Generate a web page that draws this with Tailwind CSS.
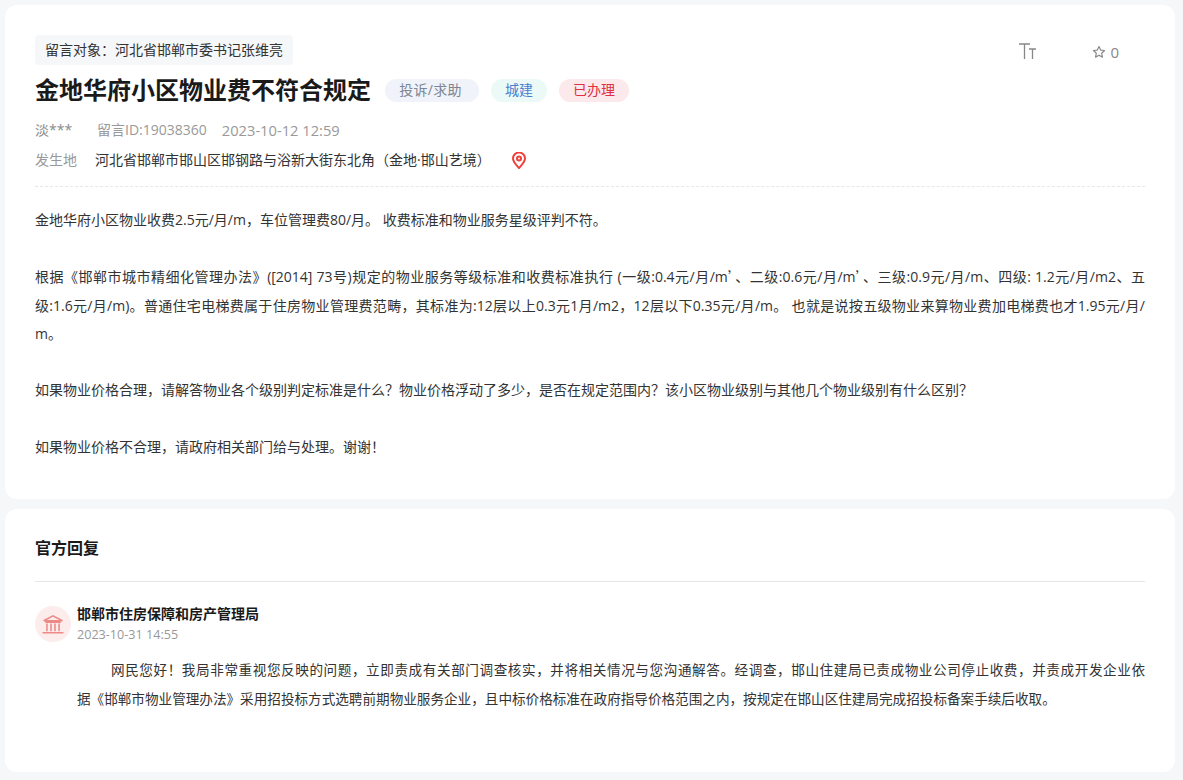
<!DOCTYPE html>
<html lang="zh">
<head>
    <meta charset="UTF-8">
    <meta name="viewport" content="width=device-width, initial-scale=1.0">
    <title>留言详情</title>
    <script src="https://cdn.jsdelivr.net/npm/@tailwindcss/browser@4"></script>
</head>
<body class="bg-[#f6f7f9] font-['Open_Sans','Noto_Sans_CJK_SC',sans-serif] text-[#333] overflow-hidden">
    <div class="w-[1180px] h-[780px] px-[5px] pt-[5px] flex flex-col gap-[10px]">

        <!-- message -->
        <div class="h-[494px] bg-white rounded-xl px-[30px] pt-[30px]">
            <div class="flex justify-between">
                <div class="h-[30px] px-[10px] flex items-center bg-[#f6f7f9] rounded-sm text-sm text-[#333]">留言对象：河北省邯郸市委书记张维亮</div>
                <div class="flex items-start text-[#888] pr-[26px] pt-[8px]">
                    <svg class="w-[18px] h-[16px] mr-[56px]" viewBox="0 0 18 16" fill="none" stroke="#888" stroke-width="1.300"><path d="M1 1h11M6.500 1v15M11 6h7M14.500 6v10"/></svg>
                    <svg class="w-[14px] h-[14px] mr-[4px] mt-[2px]" viewBox="0 0 24 24" fill="none" stroke="#888" stroke-width="2" stroke-linejoin="round"><path d="M12 2.500l2.900 6.200 6.700.8-5 4.600 1.300 6.700-5.900-3.300-5.900 3.300 1.300-6.700-5-4.600 6.700-.8z"/></svg>
                    <span class="text-[15px] leading-[19px]">0</span>
                </div>
            </div>

            <div class="flex items-center mt-[10px] h-[30px]">
                <h1 class="text-2xl font-bold text-[#1a1a1a] mr-[14px]">金地华府小区物业费不符合规定</h1>
                <span class="h-[23px] w-[94px] pr-[3px] flex items-center justify-center rounded-full bg-[#f0f3f9] text-sm tracking-[0.3px] text-[#7d8593] mr-[12px]">投诉/求助</span>
                <span class="h-[23px] w-[56px] flex items-center justify-center rounded-full bg-[#ecfaf7] text-sm text-[#4a7fd0] mr-[12px]">城建</span>
                <span class="h-[23px] w-[70px] flex items-center justify-center rounded-full bg-[#fbe9ec] text-sm text-[#e0303f]">已办理</span>
            </div>

            <div class="flex items-center mt-[15px] h-[20px] text-sm text-[#999]">
                <span class="w-[62px] text-[#8a8a8a]">淡***</span>
                <span class="mr-[15px]">留言ID:19038360</span>
                <span class="text-[14.700px]">2023-10-12 12:59</span>
            </div>

            <div class="flex items-center mt-[10px] h-[20px] text-sm">
                <span class="w-[60px] text-[#999]">发生地</span>
                <span class="text-[#333]">河北省邯郸市邯山区邯钢路与浴新大街东北角（金地·邯山艺境）</span>
                <svg class="w-[14px] h-[17px] ml-[21px]" viewBox="0 0 14 17" fill="none" stroke="#f0403c" stroke-width="2"><path d="M7 16C4 12.500 1 9.800 1 6.500a6 6 0 0 1 12 0C13 9.800 10 12.500 7 16z"/><circle cx="7" cy="6.500" r="2"/></svg>
            </div>

            <div class="border-b border-dashed border-[#e5e7eb] mt-[16px]"></div>

            <div class="mt-[19px] text-sm leading-[28.200px] text-[#333]">
                <p>金地华府小区物业收费2.5元/月/m，车位管理费80/月。 收费标准和物业服务星级评判不符。</p>
                <p class="mt-[28.200px]">
                    <span class="block [text-align-last:justify]">根据《邯郸市城市精细化管理办法》([2014] 73号)规定的物业服务等级标准和收费标准执行 (一级:0.4元/月/m<span class="font-['Noto_Sans_CJK_SC']">’</span>、二级:0.6元/月/m<span class="font-['Noto_Sans_CJK_SC']">’</span>、三级:0.9元/月/m、四级: 1.2元/月/m2、五</span>
                    <span class="block [text-align-last:justify]">级:1.6元/月/m)。普通住宅电梯费属于住房物业管理费范畴，其标准为:12层以上0.3元1月/m2，12层以下0.35元/月/m。 也就是说按五级物业来算物业费加电梯费也才1.95元/月/</span>
                    <span class="block">m。</span>
                </p>
                <p class="mt-[28.200px]">如果物业价格合理，请解答物业各个级别判定标准是什么？物业价格浮动了多少，是否在规定范围内？该小区物业级别与其他几个物业级别有什么区别？</p>
                <p class="mt-[28.200px]">如果物业价格不合理，请政府相关部门给与处理。谢谢！</p>
            </div>
        </div>

        <!-- reply -->
        <div class="h-[263px] bg-white rounded-xl px-[30px]">
            <div class="h-[73px] flex items-center border-b border-[#e5e7eb] pt-[6px]">
                <h2 class="text-base font-bold text-[#1a1a1a]">官方回复</h2>
            </div>
            <div class="flex mt-[24px]">
                <div class="w-[36px] h-[36px] rounded-full bg-[#fdecec] flex items-center justify-center mr-[6px]">
                    <svg class="w-[22px] h-[22px]" viewBox="0 0 20 20" fill="none" stroke="#ee8a86" stroke-width="1.400"><path d="M1.500 7L10 2.500 18.500 7zM3 8.500h14M4.500 9.500v7M8.200 9.500v7M11.800 9.500v7M15.500 9.500v7M.5 18h19"/></svg>
                </div>
                <div class="flex-1 -mt-[1px]">
                    <div class="text-sm font-bold text-[#1a1a1a] leading-[18px]">邯郸市住房保障和房产管理局</div>
                    <div class="text-[12.600px] text-[#999] leading-[18px] mt-[3px]">2023-10-31 14:55</div>
                    <p class="mt-[12px] text-[13.600px] leading-[28.500px] text-[#333]">
                        <span class="block indent-[34px] [text-align-last:justify]">网民您好！我局非常重视您反映的问题，立即责成有关部门调查核实，并将相关情况与您沟通解答。经调查，邯山住建局已责成物业公司停止收费，并责成开发企业依</span>
                        <span class="block">据《邯郸市物业管理办法》采用招投标方式选聘前期物业服务企业，且中标价格标准在政府指导价格范围之内，按规定在邯山区住建局完成招投标备案手续后收取。</span>
                    </p>
                </div>
            </div>
        </div>
    </div>
</body>
</html>
